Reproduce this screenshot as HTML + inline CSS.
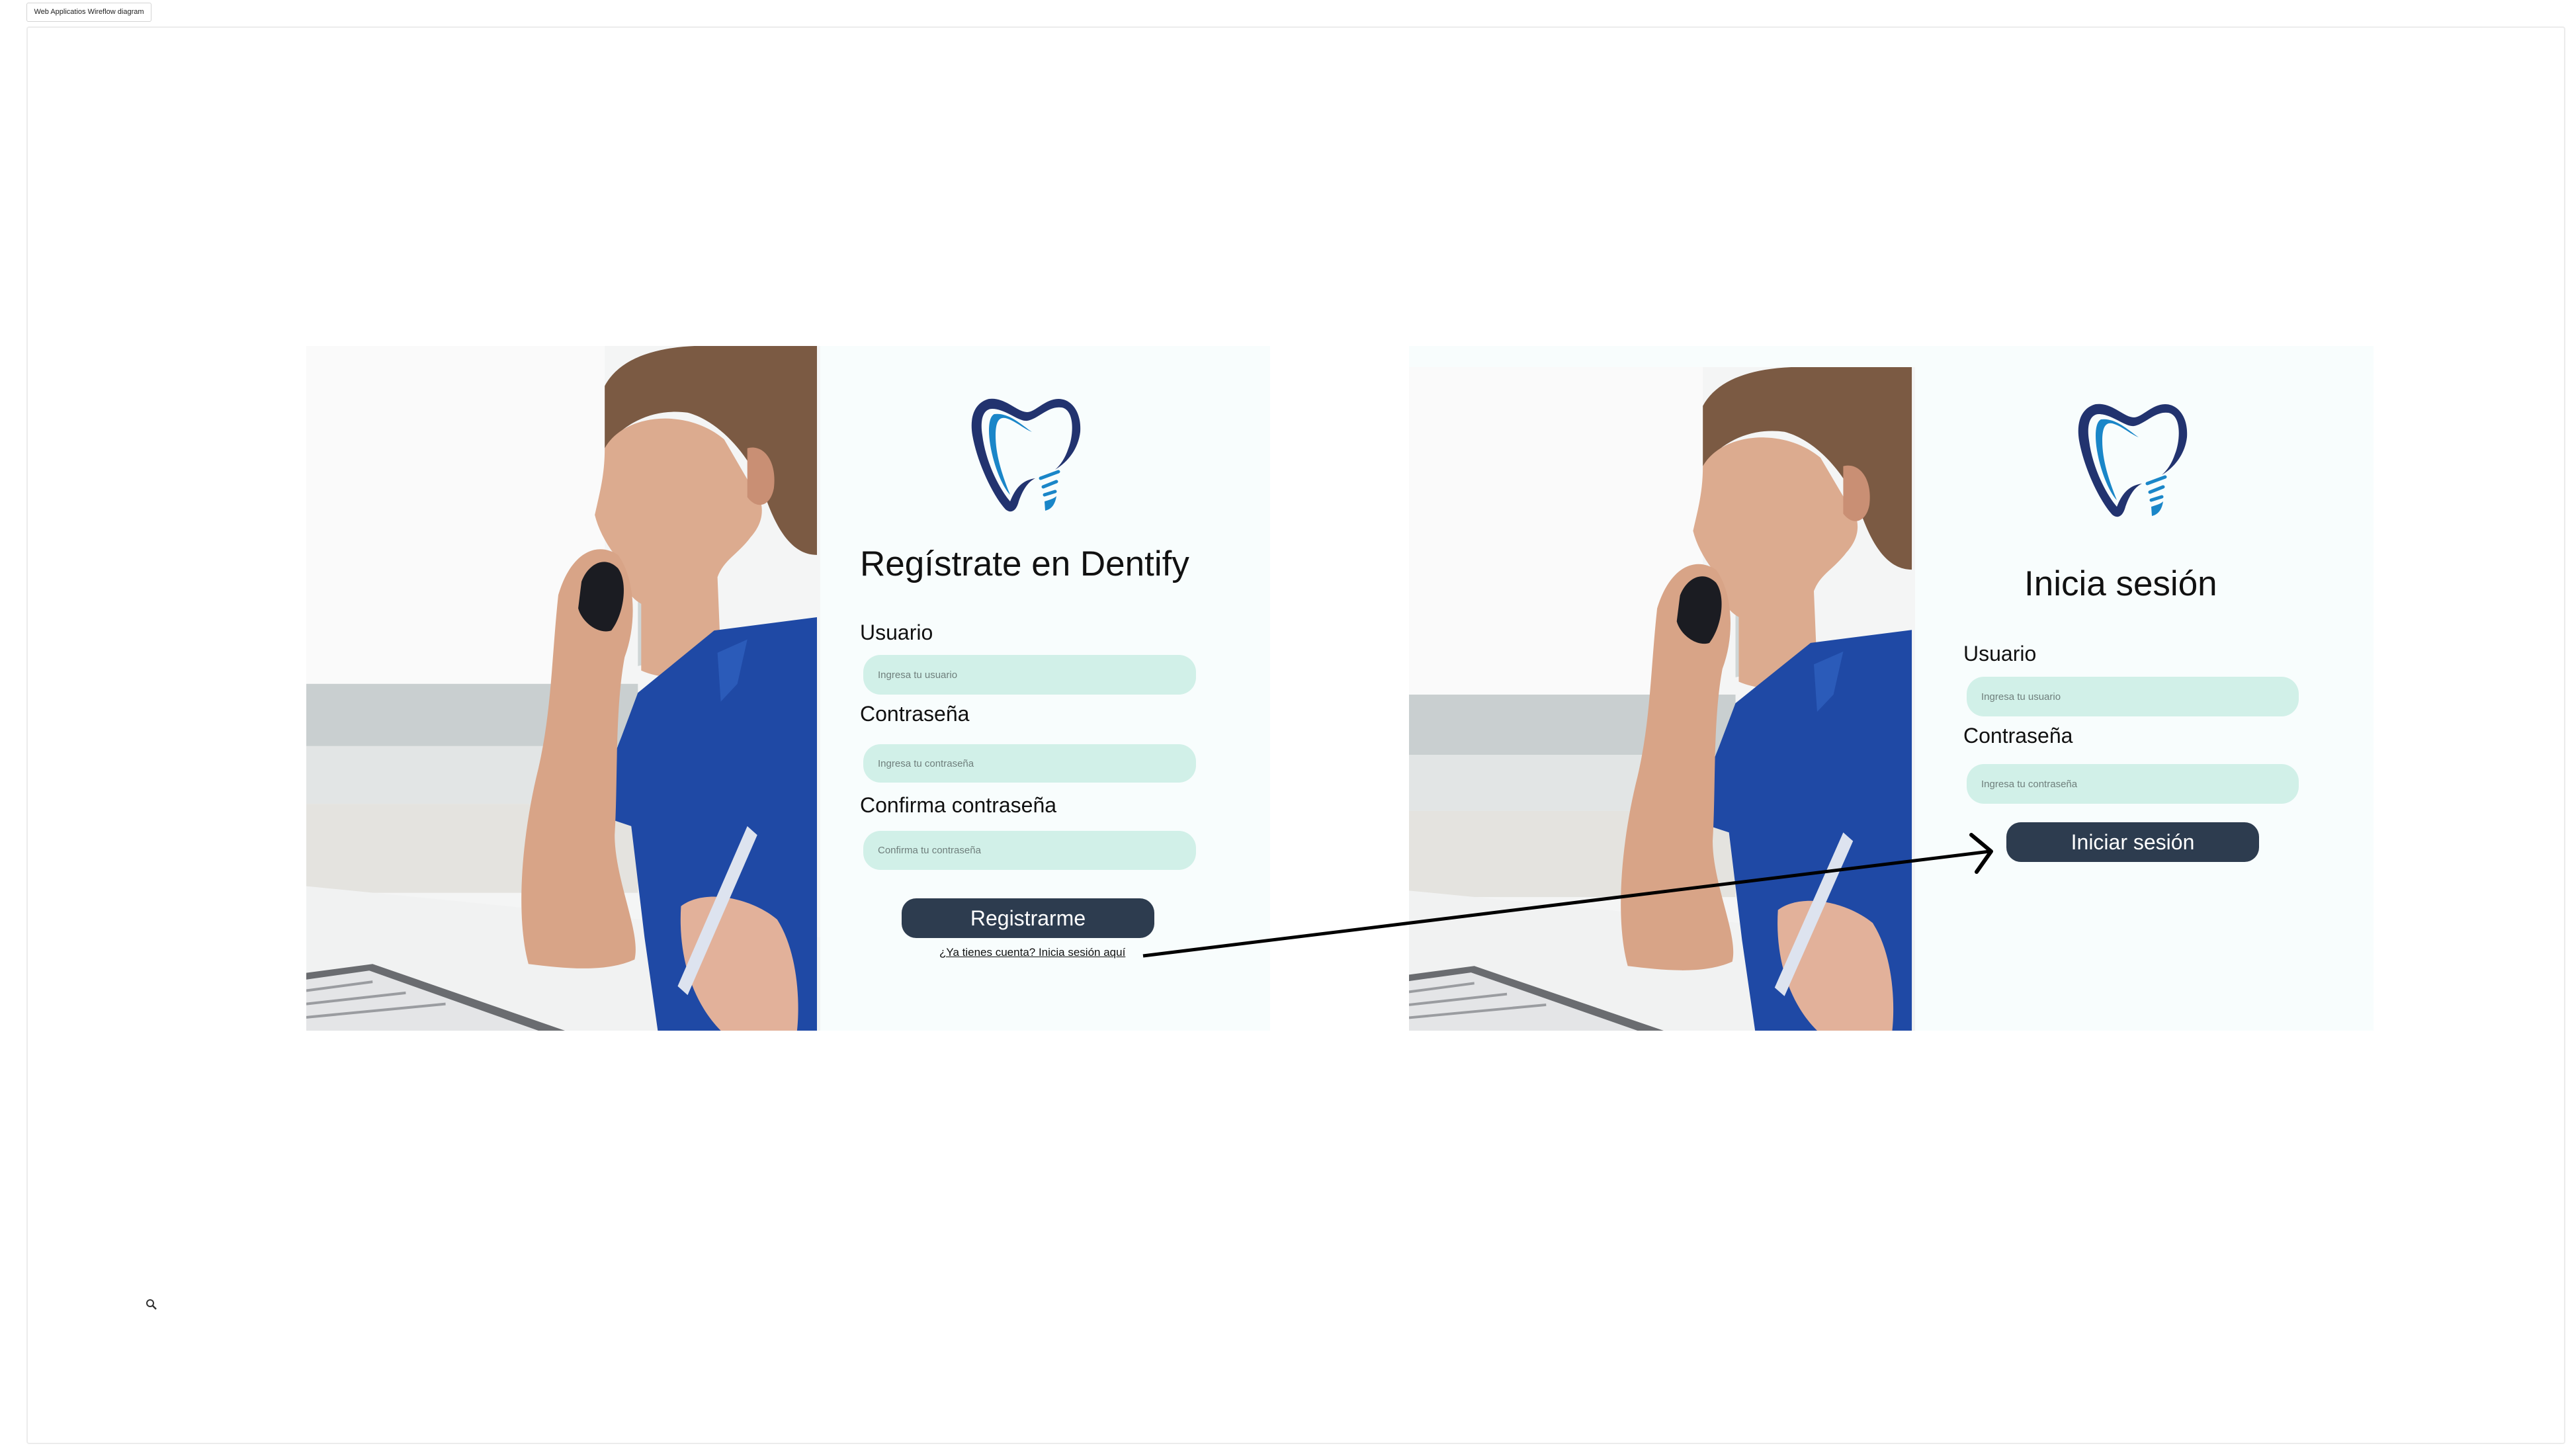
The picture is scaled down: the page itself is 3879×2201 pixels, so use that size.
<!DOCTYPE html>
<html><head><meta charset="utf-8"><style>
*{margin:0;padding:0;box-sizing:border-box}
body{width:3879px;height:2201px;background:#fff;position:relative;overflow:hidden;font-family:"Liberation Sans",sans-serif}
.abs{position:absolute}
.frame{left:40px;top:40px;width:3838px;height:2143px;border:2px solid #ececec;border-radius:4px}
.tag{left:40px;top:4px;width:189px;height:29px;border:1px solid #d4d4d4;border-radius:3px;font-size:11px;line-height:27px;text-align:center;color:#222;background:#fff}
.panel{background:#f8fdfd}
.lbl{font-size:32px;color:#111;white-space:nowrap}
.inp{background:#d1f0e8;border-radius:26px;font-size:15px;color:#6f7f7c;padding-left:22px;white-space:nowrap;display:flex;align-items:center}
.btn{background:#2d3c4f;border-radius:22px;color:#fff;font-size:32px;display:flex;align-items:center;justify-content:center}
.title{font-size:53px;color:#111;white-space:nowrap}
</style></head><body>
<div class="abs tag">Web Applicatios Wireflow diagram</div>
<div class="abs frame"></div>

<svg width="0" height="0" style="position:absolute">
<defs>
<symbol id="photo" viewBox="0 0 1550 1540" preserveAspectRatio="none">
<rect width="1550" height="1540" fill="#f4f5f5"/>
<rect x="0" y="0" width="900" height="760" fill="#fafafa"/>
<rect x="0" y="760" width="1000" height="140" fill="#c9cfd0"/>
<rect x="0" y="900" width="1000" height="130" fill="#e2e5e5"/>
<rect x="0" y="1030" width="1000" height="200" fill="#e4e3df"/>
<path d="M0 1215 L1550 1330 L1550 1540 L0 1540Z" fill="#f1f2f2"/>
<path d="M1000 560 L1120 540 L1120 700 L1000 720Z" fill="#cfd6d6"/>
<path d="M900 90 C950 20 1080 -5 1250 0 L1540 0 L1540 470 C1470 470 1420 420 1380 330 C1340 250 1250 170 1150 150 C1050 140 960 170 900 230Z" fill="#7b5a43"/>
<path d="M900 230 C960 150 1150 140 1260 210 L1330 300 C1370 330 1400 380 1340 430 C1300 470 1260 480 1240 520 L1250 700 C1200 740 1100 760 1010 730 L1010 580 C960 560 930 500 930 470 C900 440 880 410 870 380 C885 330 900 290 900 230Z" fill="#dcab8f"/>
<path d="M1330 230 C1380 220 1420 260 1410 320 C1400 360 1360 370 1330 340Z" fill="#c98f74"/>
<path d="M1000 780 L1230 640 L1540 610 L1540 1540 L1060 1540 L1020 1330 L980 1080 L860 1050 L950 880Z" fill="#1f49a5"/>
<path d="M1240 690 L1250 800 L1300 760 L1330 660Z" fill="#2b5bb9"/>
<path d="M760 560 C800 460 880 440 940 470 C990 520 1000 620 960 700 C930 820 940 980 930 1100 C930 1200 1010 1320 990 1380 C900 1410 780 1400 670 1390 C630 1280 650 1100 700 950 C740 820 740 700 760 560Z" fill="#d8a487"/>
<path d="M830 530 C850 490 900 470 940 500 C970 530 960 600 920 640 C880 650 830 620 820 590Z" fill="#1b1c22"/>
<path d="M1130 1260 C1200 1220 1340 1240 1420 1290 C1480 1360 1490 1470 1480 1540 L1250 1540 C1170 1480 1120 1380 1130 1260Z" fill="#e2b19a"/>
<path d="M1120 1440 L1330 1080 L1360 1100 L1150 1460Z" fill="#dde3ef"/>
<path d="M0 1410 L200 1390 L780 1540 L0 1540Z" fill="#6a6c70"/>
<path d="M0 1425 L190 1405 L700 1540 L0 1540Z" fill="#e4e5e7"/>
<path d="M0 1450 L200 1430 M0 1480 L300 1455 M0 1510 L420 1480" stroke="#9a9ca0" stroke-width="6"/>
</symbol>
<symbol id="tooth" viewBox="0 0 170 180">
<path d="M30 5 C10 10 0 30 5 60 C12 100 35 150 55 172 C65 180 72 172 75 160 C82 140 90 130 100 125 C80 128 70 140 62 160 C45 140 25 100 20 60 C16 35 22 20 35 20 C55 20 75 40 88 38 C105 35 120 15 140 18 C160 22 158 60 150 80 C145 95 138 105 130 112 C150 100 165 80 168 55 C170 25 155 5 135 5 C115 5 100 25 88 25 C72 25 55 2 30 5Z" fill="#22336f"/>
<path d="M38 28 C30 32 28 50 32 75 C38 110 52 140 62 150 C50 120 40 90 40 60 C40 40 45 32 55 34 C70 38 82 50 95 55 C80 45 60 25 38 28Z" fill="#1a86c8"/>
<path d="M108 125 L135 115 M112 138 L132 130 M114 150 L130 145" stroke="#1a86c8" stroke-width="5" stroke-linecap="round"/>
<path d="M114 160 C120 158 128 156 132 152 C130 165 124 172 115 174Z" fill="#1a86c8"/>
</symbol>
</defs>
</svg>

<!-- Left card -->
<div class="abs panel" style="left:463px;top:523px;width:1457px;height:1035px"></div>
<svg class="abs" style="left:463px;top:523px" width="777" height="1035"><use href="#photo" width="777" height="1035"/></svg>
<svg class="abs" style="left:1465px;top:598px" width="170" height="180"><use href="#tooth" width="170" height="180"/></svg>
<div class="abs title" style="left:1300px;top:822px">Regístrate en Dentify</div>
<div class="abs lbl" style="left:1300px;top:938px">Usuario</div>
<div class="abs inp" style="left:1305px;top:990px;width:503px;height:60px">Ingresa tu usuario</div>
<div class="abs lbl" style="left:1300px;top:1061px">Contraseña</div>
<div class="abs inp" style="left:1305px;top:1125px;width:503px;height:58px">Ingresa tu contraseña</div>
<div class="abs lbl" style="left:1300px;top:1199px">Confirma contraseña</div>
<div class="abs inp" style="left:1305px;top:1256px;width:503px;height:59px">Confirma tu contraseña</div>
<div class="abs btn" style="left:1363px;top:1358px;width:382px;height:60px">Registrarme</div>
<div class="abs" style="left:1420px;top:1430px;font-size:17px;color:#111;text-decoration:underline;white-space:nowrap">¿Ya tienes cuenta? Inicia sesión aquí</div>

<!-- Right card -->
<div class="abs panel" style="left:2130px;top:523px;width:1458px;height:1035px"></div>
<svg class="abs" style="left:2130px;top:555px" width="765" height="1003"><use href="#photo" width="765" height="1003"/></svg>
<svg class="abs" style="left:3138px;top:606px" width="170" height="180"><use href="#tooth" width="170" height="180"/></svg>
<div class="abs title" style="left:3060px;top:852px">Inicia sesión</div>
<div class="abs lbl" style="left:2968px;top:970px">Usuario</div>
<div class="abs inp" style="left:2973px;top:1023px;width:502px;height:60px">Ingresa tu usuario</div>
<div class="abs lbl" style="left:2968px;top:1094px">Contraseña</div>
<div class="abs inp" style="left:2973px;top:1155px;width:502px;height:60px">Ingresa tu contraseña</div>
<div class="abs btn" style="left:3033px;top:1243px;width:382px;height:60px">Iniciar sesión</div>

<!-- Arrow -->
<svg class="abs" style="left:0;top:0" width="3879" height="2201">
<path d="M1728 1445 L3008 1287" stroke="#000" stroke-width="5" fill="none"/>
<path d="M2980 1262 L3010 1287 L2988 1318" stroke="#000" stroke-width="6" fill="none" stroke-linecap="round" stroke-linejoin="round"/>
<circle cx="227" cy="1970" r="5" stroke="#333" stroke-width="2" fill="none"/>
<path d="M231 1974 L236 1979" stroke="#333" stroke-width="2.5"/>
</svg>
</body></html>
